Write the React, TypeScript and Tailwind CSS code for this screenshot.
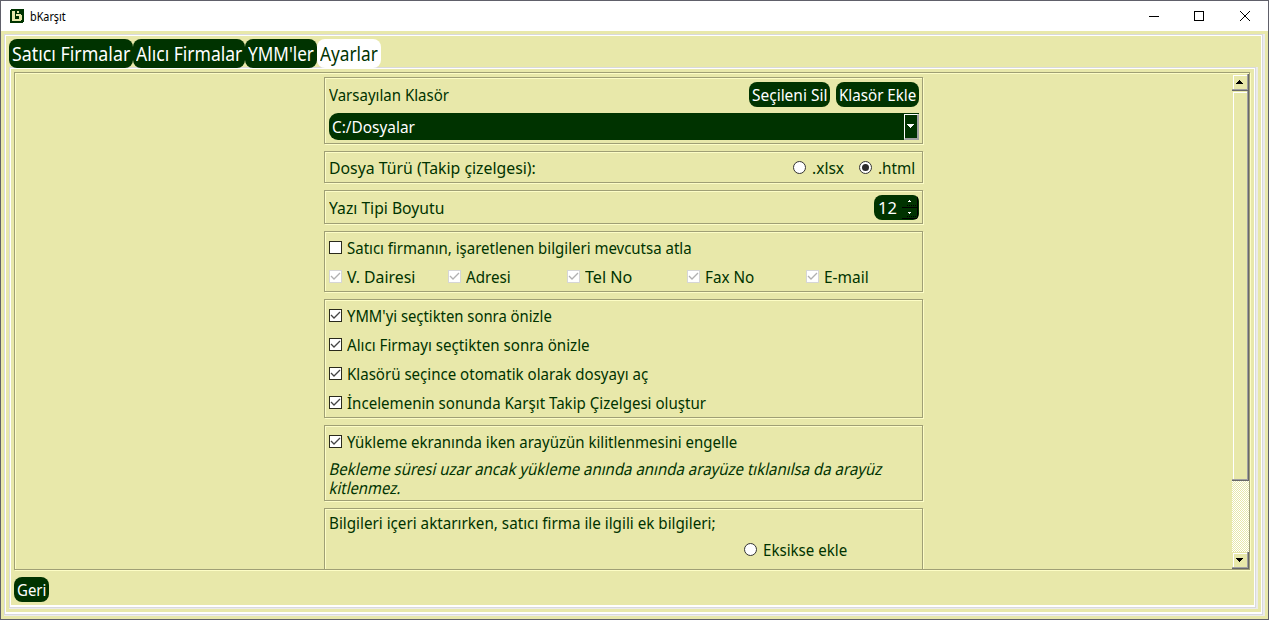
import React, { useLayoutEffect, useRef, type ReactNode } from "react";

/* Text run condensed horizontally so that it fills a given advance width. */
function T({ w, className = "", slant = false, children }: { w: number; className?: string; slant?: boolean; children: ReactNode }) {
  const box = useRef<HTMLSpanElement>(null);
  const run = useRef<HTMLSpanElement>(null);
  useLayoutEffect(() => {
    if (!box.current || !run.current) return;
    box.current.style.width = `${w}px`;
    run.current.style.transform = `scaleX(${w / run.current.offsetWidth})${slant ? " skewX(-14deg)" : ""}`;
  }, [w, slant]);
  return (
    <span ref={box} className={`flex shrink-0 ${className}`}>
      <span ref={run} className="shrink-0 origin-left whitespace-pre">
        {children}
      </span>
    </span>
  );
}

function Check({ on = true, disabled = false }: { on?: boolean; disabled?: boolean }) {
  return (
    <span
      className={`flex size-[13px] shrink-0 items-center justify-center border bg-white ${
        disabled ? "border-[#d6d6d6]" : "border-[#2a2a1c]"
      }`}
    >
      {on && (
        <svg width="11" height="11" viewBox="0 0 11 11" fill="none">
          <path d="M1 5 L4 8 L10 2" stroke={disabled ? "#b0b0b0" : "#444"} strokeWidth="1.3" />
        </svg>
      )}
    </span>
  );
}

function Radio({ on = false }: { on?: boolean }) {
  return (
    <span className="flex size-[13px] shrink-0 items-center justify-center rounded-full border border-[#333] bg-white">
      {on && <span className="size-[7px] rounded-full bg-[#2b2b2b]" />}
    </span>
  );
}

function Group({ className = "", children }: { className?: string; children: ReactNode }) {
  return (
    <section
      className={`w-[599px] shrink-0 border border-[#9f9f75] pr-[3px] pl-1 shadow-[1px_1px_0_#fdfdc6,inset_1px_1px_0_#fdfdc6] ${className}`}
    >
      {children}
    </section>
  );
}

function CheckRow({ label, w, on = true }: { label: string; w: number; on?: boolean }) {
  return (
    <div className="flex h-[29px] items-center gap-[5px]">
      <Check on={on} />
      <T w={w}>{label}</T>
    </div>
  );
}

function Pill({ w, className, children }: { w: number; className: string; children: ReactNode }) {
  return (
    <button className={`flex shrink-0 items-center justify-center rounded-[8px] bg-[#003300] text-white ${className}`}>
      <T w={w}>{children}</T>
    </button>
  );
}

/* Etched double frame: grey outside, white inside, light strip to the right and below. */
function Etched({ className = "", children }: { className?: string; children: ReactNode }) {
  return (
    <div className="flex min-h-0 flex-1 flex-col bg-[#ebebeb] pr-[2px] pb-px">
      <div className="flex min-h-0 flex-1 flex-col border border-[#d9d9dc]">
        <div className={`flex min-h-0 flex-1 flex-col border border-b-2 border-white bg-[#e8e8aa] ${className}`}>
          {children}
        </div>
      </div>
    </div>
  );
}

function TitleBar() {
  return (
    <header className="flex h-[30px] shrink-0 items-center bg-white pl-[9px] text-black">
      <svg width="14" height="14" viewBox="0 0 14 14" shapeRendering="crispEdges">
        <rect width="14" height="14" rx="2" fill="#003300" />
        <path d="M2 2h3v8h2v2H2zM7 2h2v2H7zM6 5h5v1h1v5h-1v1H7v-2h2V7H6z" fill="#e8e8aa" />
      </svg>
      <T w={36} className="pt-px ml-[6px] text-[12px]">bKarşıt</T>
      <svg className="mr-[17px] ml-auto" width="102" height="12" viewBox="0 0 102 12" fill="none" stroke="#000">
        <path d="M0 6.5H10" shapeRendering="crispEdges" />
        <rect x="45.5" y="1.5" width="9" height="9" shapeRendering="crispEdges" />
        <path d="M91 1L101 11M101 1L91 11" />
      </svg>
    </header>
  );
}

function ScrollPart({ className, children }: { className: string; children?: ReactNode }) {
  return (
    <div
      className={`flex shrink-0 items-center justify-center border-r border-b border-[#696969] bg-[#e8e8aa] shadow-[inset_-1px_-1px_0_#a0a0a0,inset_1px_1px_0_#e8e8aa,inset_2px_2px_0_#fff] ${className}`}
    >
      {children}
    </div>
  );
}

function ScrollBar() {
  return (
    <div className="flex w-[17px] shrink-0 flex-col pt-px">
      <ScrollPart className="h-[17px] pr-[2px]">
        <svg width="7" height="4" viewBox="0 0 7 4" shapeRendering="crispEdges">
          <path d="M3 0h1v1h1v1h1v1h1v1H0V3h1V2h1V1h1z" />
        </svg>
      </ScrollPart>
      <ScrollPart className="h-[390px]" />
      <svg className="min-h-0 w-[17px] flex-1" shapeRendering="crispEdges">
        <defs>
          <pattern id="dither" width="2" height="2" patternUnits="userSpaceOnUse">
            <path d="M0 0h1v1H0zM1 1h1v1H1z" fill="#fff" />
          </pattern>
        </defs>
        <rect width="17" height="100%" fill="url(#dither)" />
      </svg>
      <ScrollPart className="h-[17px] pr-[2px]">
        <svg width="7" height="4" viewBox="0 0 7 4" shapeRendering="crispEdges">
          <path d="M0 0h7v1H6v1H5v1H4v1H3V3H2V2H1V1H0z" />
        </svg>
      </ScrollPart>
    </div>
  );
}

const fields = [
  { label: "V. Dairesi", w: 68, cell: "w-[119px]" },
  { label: "Adresi", w: 45, cell: "w-[119px]" },
  { label: "Tel No", w: 47, cell: "w-[120px]" },
  { label: "Fax No", w: 49, cell: "w-[119px]" },
  { label: "E-mail", w: 45, cell: "w-[100px]" },
];

function Settings() {
  return (
    <div className="flex min-w-0 flex-1 flex-col items-center gap-[7px] overflow-hidden pt-1">
      <Group className="h-[67px] pt-1">
        <div className="flex h-[25px] items-center gap-[6px]">
          <T w={120} className="mr-auto">Varsayılan Klasör</T>
          <Pill w={75} className="h-[25px] w-[81px]">Seçileni Sil</Pill>
          <Pill w={77} className="h-[25px] w-[83px]">Klasör Ekle</Pill>
        </div>
        <div className="mt-[6px] flex h-[27px] items-center rounded-l-[9px] bg-[#003300] pl-[3px] text-white">
          <T w={83}>C:/Dosyalar</T>
          <span className="ml-auto flex h-[26px] w-[15px] items-center justify-center border border-r-2 border-b-2 border-white border-r-[#a0a0a0] border-b-[#a0a0a0] pr-px">
            <svg className="shrink-0" width="7" height="4" viewBox="0 0 7 4" fill="#fff" shapeRendering="crispEdges">
              <path d="M0 0h7v1H6v1H5v1H4v1H3V3H2V2H1V1H0z" />
            </svg>
          </span>
        </div>
      </Group>
      <Group className="flex h-[32px] items-center pt-px">
        <T w={207} className="mr-auto">Dosya Türü (Takip çizelgesi):</T>
        <Radio />
        <T w={32} className="ml-[6px]">.xlsx</T>
        <span className="ml-[15px] flex"><Radio on /></span>
        <T w={37} className="mr-1 ml-[6px]">.html</T>
      </Group>
      <Group className="flex h-[34px] items-center justify-between">
        <T w={115}>Yazı Tipi Boyutu</T>
        <div className="flex h-[25px] w-[45px] items-center overflow-hidden rounded-l-[8px] rounded-r-[6px] bg-[#003300] pl-1 text-white">
          <T w={19}>12</T>
          <svg className="mr-px ml-auto" width="16" height="23" viewBox="0 0 16 23" shapeRendering="crispEdges">
            <path d="M15 0h1v23h-1zM0 11h16v1H0zM0 22h16v1H0z" fill="#000" />
            <path d="M5 9.5h11M5 20.5h11" stroke="#000" strokeDasharray="1 1" />
            <path d="M7 4h1v1h1v1H6V5h1zM6 16h3v1H8v1H7v-1H6z" fill="#fff" />
          </svg>
        </div>
      </Group>
      <Group className="h-[61px] pt-px">
        <CheckRow on={false} w={345} label="Satıcı firmanın, işaretlenen bilgileri mevcutsa atla" />
        <div className="flex h-[29px] items-center">
          {fields.map((f) => (
            <div key={f.label} className={`flex items-center gap-[5px] ${f.cell}`}>
              <Check disabled />
              <T w={f.w}>{f.label}</T>
            </div>
          ))}
        </div>
      </Group>
      <Group className="h-[119px] pt-px">
        <CheckRow w={205} label="YMM'yi seçtikten sonra önizle" />
        <CheckRow w={243} label="Alıcı Firmayı seçtikten sonra önizle" />
        <CheckRow w={301} label="Klasörü seçince otomatik olarak dosyayı aç" />
        <CheckRow w={359} label="İncelemenin sonunda Karşıt Takip Çizelgesi oluştur" />
      </Group>
      <Group className="h-[76px] pt-px">
        <CheckRow w={390} label="Yükleme ekranında iken arayüzün kilitlenmesini engelle" />
        <p className="flex flex-col items-start pt-[3px] pl-px">
          <T w={553} slant>Bekleme süresi uzar ancak yükleme anında anında arayüze tıklanılsa da arayüz</T>
          <T w={72} slant>kitlenmez.</T>
        </p>
      </Group>
      <Group className="h-[100px] pt-1">
        <T w={387}>Bilgileri içeri aktarırken, satıcı firma ile ilgili ek bilgileri;</T>
        <div className="mt-[3px] flex h-[29px] items-center gap-[6px] pl-[415px]">
          <Radio />
          <T w={84}>Eksikse ekle</T>
        </div>
      </Group>
    </div>
  );
}

export default function App() {
  return (
    <main className="flex h-[620px] w-[1269px] flex-col overflow-hidden border border-[#60606a] bg-[#e8e8aa] font-['Noto_Sans','Open_Sans',sans-serif] text-[16.5px] leading-[19px] text-[#003300]">
      <TitleBar />
      <div className="flex min-h-0 flex-1 flex-col p-[3px]">
        <Etched className="p-[3px]">
          <nav className="relative -mb-px flex h-[29px] shrink-0 text-[19px]">
            <Pill w={118} className="h-[29px] w-[124px] pt-[2px]">Satıcı Firmalar</Pill>
            <Pill w={106} className="h-[29px] w-[112px] pt-[2px]">Alıcı Firmalar</Pill>
            <Pill w={66} className="h-[29px] w-[72px] pt-[2px]">YMM'ler</Pill>
            <button className="flex w-[64px] items-center justify-center rounded-[8px] bg-white pt-[2px]">
              <T w={58}>Ayarlar</T>
            </button>
          </nav>
          <Etched className="pt-[3px] pr-1 pl-[3px]">
            <div className="flex h-[498px] shrink-0 border border-[#9f9f75] shadow-[1px_1px_0_#fdfdc6,inset_1px_1px_0_#fdfdc6]">
              <Settings />
              <ScrollBar />
            </div>
            <Pill w={29} className="mt-[7px] h-[25px] w-[35px]">Geri</Pill>
          </Etched>
        </Etched>
      </div>
    </main>
  );
}
